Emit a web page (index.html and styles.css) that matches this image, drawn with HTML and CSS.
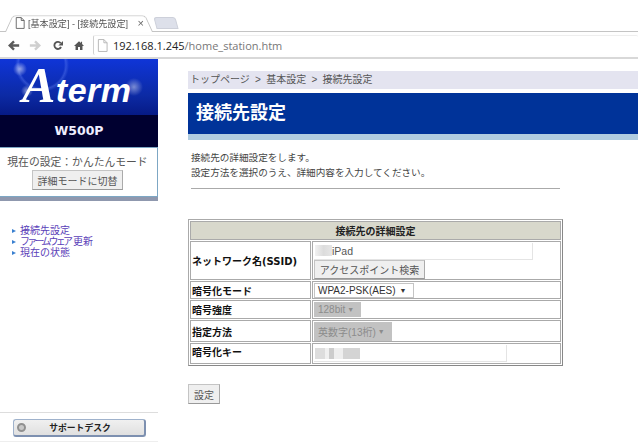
FILE: index.html
```html
<!DOCTYPE html>
<html lang="ja">
<head>
  <meta charset="UTF-8" />
  <title>[基本設定] - [接続先設定]</title>
  <link rel="stylesheet" href="styles.css">
</head>
<body>
  <div class="chrome">
    <div class="tabstrip">
      <div class="tab">
        <svg width="10" height="12" viewBox="0 0 12 14"><path d="M1.500 .5h6l3.500 3.500v9.500h-9.500z M7.500 .5v3.500h3.500" fill="#fff" stroke="#555"/></svg>
        <span class="tab-title">[基本設定] - [接続先設定]</span>
        <span class="tab-close">×</span>
      </div>
      <div class="newtab"></div>
    </div>
    <div class="toolbar">
      <svg width="12" height="11" viewBox="0 0 14 12"><path d="M13 6H3M7 1.200 2 6l5 4.800" fill="none" stroke="#5a5a5a" stroke-width="2.800"/></svg>
      <svg width="12" height="11" viewBox="0 0 14 12"><path d="M1 6h10M7 1.200 12 6l-5 4.800" fill="none" stroke="#cfcfcf" stroke-width="2.800"/></svg>
      <svg class="reload" width="10" height="11" viewBox="0 0 13 13"><path d="M10.500 8.500A4.600 4.600 0 1 1 10 3.500" fill="none" stroke="#555" stroke-width="2.400"/><path d="M13 .5v6H7z" fill="#555"/></svg>
      <svg class="home" width="10" height="11" viewBox="0 0 13 12"><path d="M6.500 .5 0 6.500h2V12h3.200V8h2.600v4H11V6.500h2L10.500 4V1H9v1.600z" fill="#555"/></svg>
      <div class="omnibox">
        <svg width="11" height="13" viewBox="0 0 12 14"><path d="M1.500 .5h6l3.500 3.500v9.500h-9.500z M7.500 .5v3.500h3.500" fill="#fff" stroke="#b4b4b4"/></svg>
        <span class="url"><b>192.168.1.245</b>/home_station.htm</span>
      </div>
    </div>
  </div>

  <div class="page">
    <aside class="side">
      <div class="logo"><span class="logo-text"><span class="logo-a">A</span>term</span></div>
      <div class="model">W500P</div>
      <div class="mode-box">
        <div>現在の設定：かんたんモード</div>
        <button class="btn mode-btn">詳細モードに切替</button>
      </div>
      <div class="mode-shadow"></div>
      <ul class="menu">
        <li><a>接続先設定</a></li>
        <li><a><span class="narrow">ファームウェア</span>更新</a></li>
        <li><a>現在の状態</a></li>
      </ul>
      <div class="support">
        <div class="support-btn"><span class="support-dot"></span><span class="support-label">サポートデスク</span></div>
      </div>
    </aside>

    <main class="main">
      <div class="crumb">トップページ &gt; 基本設定 &gt; 接続先設定</div>
      <h1 class="heading">接続先設定</h1>
      <div class="intro">
        <p>接続先の詳細設定をします。</p>
        <p>設定方法を選択のうえ、詳細内容を入力してください。</p>
      </div>
      <hr class="rule">
      <table class="form">
        <tr class="row-title"><th colspan="2" class="form-title">接続先の詳細設定</th></tr>
        <tr class="row-ssid">
          <th>ネットワーク名(SSID)</th>
          <td>
            <div class="field ssid"><span class="blur blur-short"></span>iPad</div>
            <button class="btn search-btn">アクセスポイント検索</button>
          </td>
        </tr>
        <tr class="row-mode">
          <th>暗号化モード</th>
          <td><span class="select">WPA2-PSK(AES)<i>▼</i></span></td>
        </tr>
        <tr class="row-strength">
          <th>暗号強度</th>
          <td><span class="select off">128bit<i>▼</i></span></td>
        </tr>
        <tr class="row-method">
          <th>指定方法</th>
          <td><span class="select off tall">英数字(13桁)<i>▼</i></span></td>
        </tr>
        <tr class="row-key">
          <th>暗号化キー</th>
          <td><div class="field key"><span class="blur blur-long"></span></div></td>
        </tr>
      </table>
      <button class="btn submit">設定</button>
    </main>
  </div>
</body>
</html>
```

FILE: styles.css
```css
* {
  box-sizing: border-box;
}

html, body {
  margin: 0;
  height: 100%;
}

body {
  width: 638px;
  height: 442px;
  overflow: hidden;
  background: #fff;
  color: #444;
  font-family: "Liberation Sans", "Noto Sans CJK JP", sans-serif;
  font-size: 10px;
  display: flex;
  flex-direction: column;
}

/* browser */
.chrome {
  height: 59px;
  flex: none;
}

.tabstrip {
  height: 32px;
  padding: 13px 0 0 5px;
  display: flex;
  align-items: flex-end;
  background: #fff;
  border-bottom: 1px solid #c4c4c4;
}

.tab {
  position: relative;
  z-index: 0;
  width: 148px;
  height: 19px;
  margin-bottom: -1px;
  padding: 0 9px 0 10px;
  display: flex;
  align-items: center;
  gap: 3px;
}

.tab::before {
  content: "";
  position: absolute;
  inset: 0;
  z-index: -1;
  background: #fff;
  border: 1px solid #c4c4c4;
  border-bottom: none;
  border-radius: 4px 4px 0 0;
  transform: perspective(40px) rotateX(14deg);
  transform-origin: bottom;
}

.tab-title {
  color: #555;
  font-size: 9.100px;
  white-space: nowrap;
}

.tab-close {
  margin-left: auto;
  color: #666;
  font-size: 11px;
}

.newtab {
  width: 22px;
  height: 12px;
  margin: 0 0 2px 2px;
  background: #dde0ea;
  border: 1px solid #cdd0da;
  border-radius: 3px 3px 0 0;
  transform: skewX(15deg);
}

.toolbar {
  height: 27px;
  padding: 3px 0 2px 8px;
  display: flex;
  align-items: center;
  gap: 9px;
  background: #fefefe;
  border-bottom: 2px solid #d8d8d8;
}

.reload {
  margin-left: 3px;
}

.home {
  margin-left: 2px;
}

.omnibox {
  flex: 1;
  height: 20px;
  padding-left: 3px;
  display: flex;
  align-items: center;
  gap: 5px;
  background: #fff;
  border-left: 1px solid #d0d0d0;
  border-top: 1px solid #eee;
  border-radius: 2px;
}

.url {
  color: #777;
  font-family: "Open Sans", "Liberation Sans", sans-serif;
  font-size: 11px;
}

.url b {
  color: #222;
  font-weight: 400;
}

/* layout */
.page {
  flex: 1;
  display: flex;
  min-height: 0;
}

.side {
  width: 158px;
  flex: none;
  display: flex;
  flex-direction: column;
}

.main {
  flex: 1;
  padding: 12px 0 0 30px;
}

/* sidebar */
.logo {
  height: 56px;
  padding: 0 0 5px 22px;
  display: flex;
  align-items: center;
  background:
    radial-gradient(circle at 20px 10px, rgba(255,255,255,.55), transparent 7px),
    radial-gradient(circle at 134px 28px, rgba(255,255,255,.45), transparent 9px),
    radial-gradient(circle at 27px 32px, rgba(255,255,255,.5), transparent 6px),
    radial-gradient(circle at 42px 6px, transparent 22px, rgba(120,150,255,.3) 24px, transparent 27px),
    linear-gradient(#0f35d8, #0c2aa4 65%, #061a86);
}

.logo-text {
  color: #fff;
  font-family: "Liberation Sans", sans-serif;
  font-size: 34px;
  font-weight: 700;
  font-style: italic;
  line-height: 1;
  letter-spacing: .5px;
}

.logo-a {
  font-family: "Liberation Serif", serif;
  font-size: 50px;
  font-weight: 700;
}

.model {
  height: 32px;
  line-height: 32px;
  background: #000030;
  color: #eef;
  font-family: "DejaVu Sans", sans-serif;
  font-size: 12.500px;
  font-weight: 700;
  text-align: center;
}

.mode-box {
  height: 50px;
  padding: 7px 2px 0 0;
  display: flex;
  flex-direction: column;
  align-items: center;
  gap: 1px;
  background: #fff;
  border: 1px solid #7da7c4;
  border-left: none;
  color: #555;
  font-size: 10.800px;
  line-height: 14px;
}

.mode-shadow {
  height: 4px;
  background: #8f98ae;
}

.btn {
  padding: 0;
  background: #efefef;
  border: 1px solid #c4c4c4;
  border-bottom-color: #999;
  border-right-color: #aaa;
  color: #555;
  font-family: inherit;
  font-size: 10px;
}

.mode-btn {
  width: 91px;
  height: 20px;
}

.menu {
  margin: 24px 0 0;
  padding: 0 0 0 12px;
  list-style: none;
  color: #5a40b8;
  font-size: 10px;
  line-height: 11px;
}

.menu li {
  display: flex;
  align-items: center;
  gap: 4px;
}

.menu li::before {
  content: "";
  border-left: 4px solid #3a80d0;
  border-top: 2.500px solid transparent;
  border-bottom: 2.500px solid transparent;
}

.narrow {
  letter-spacing: -2.800px;
  margin-right: 2.800px;
}

.support {
  margin-top: auto;
  height: 30px;
  padding: 6px 12px 0 13px;
  border-top: 1px solid #ddd;
  border-bottom: 1px solid #eee;
}

.support-btn {
  height: 18px;
  display: flex;
  align-items: center;
  padding-left: 3px;
  background: linear-gradient(#f0f0f0, #e0e0e0);
  border: 1px solid #9fb2cc;
  border-bottom: 2px solid #7d90b0;
  border-right: 2px solid #7d90b0;
  border-radius: 3px;
}

.support-dot {
  width: 9px;
  height: 9px;
  border-radius: 50%;
  background: #c8c8c8;
  border: 2px solid #909090;
}

.support-label {
  flex: 1;
  padding-right: 10px;
  color: #222;
  font-size: 8.800px;
  font-weight: 700;
  text-align: center;
}

/* main */
.crumb {
  height: 18px;
  line-height: 18px;
  padding-left: 2px;
  background: #e4e4f0;
  color: #555;
  font-size: 10px;
  word-spacing: 2.500px;
}

.heading {
  height: 47px;
  margin: 4px 0 0;
  padding: 0 0 5px 8px;
  display: flex;
  align-items: center;
  background: #003399;
  border-bottom: 6px solid #b0cce0;
  color: #fff;
  font-size: 18px;
  font-weight: 700;
}

.intro {
  margin: 10px 0 0 3px;
  color: #444;
  font-size: 9.600px;
  line-height: 15px;
}

.intro p {
  margin: 0;
}

.rule {
  width: 369px;
  height: 1px;
  margin: 8px 0 0 3px;
  border: 0;
  background: #aaa;
}

.form {
  width: 375px;
  margin-top: 30px;
  border: 1px solid #aaa;
  border-right-color: #888;
  border-bottom-color: #888;
  border-spacing: 1px;
  border-collapse: separate;
  font-size: 10px;
}

.form th, .form td {
  padding: 0 1px;
  border: 1px solid #aaa;
}

.form th {
  width: 121px;
  color: #111;
  font-family: "DejaVu Sans", "Noto Sans CJK JP", sans-serif;
  font-weight: 700;
  text-align: left;
}

.row-title > * { height: 19px; }
.row-ssid > * { height: 39px; }
.row-mode > * { height: 18px; }
.row-strength > * { height: 19px; }
.row-method > * { height: 22px; }
.row-key > * { height: 20px; }

.form .row-key th {
  padding-bottom: 4px;
}

.form .form-title {
  width: auto;
  background: #d8d8cc;
  color: #222;
  font-family: "Liberation Sans", "Noto Sans CJK JP", sans-serif;
  text-align: center;
}

.field {
  display: flex;
  align-items: center;
  height: 17px;
  padding-left: 1px;
  background: #fff;
  border-right: 1px solid #e4e4e4;
  border-bottom: 1px solid #e4e4e4;
  color: #555;
  font-size: 10.500px;
}

.ssid {
  width: 219px;
}

.key {
  width: 193px;
}

.blur {
  height: 11px;
}

.blur-short {
  width: 17px;
  background: linear-gradient(90deg, #f2f2f2, #dcdcdc 50%, #e6e6e6);
}

.blur-long {
  width: 45px;
  background: linear-gradient(90deg, #ddd 0 22%, #f0f0f0 22% 32%, #ccc 32% 42%, #eee 42% 62%, #d4d4d4 62% 100%);
}

.search-btn {
  display: block;
  width: 111px;
  height: 19px;
}

.select {
  display: inline-flex;
  align-items: center;
  height: 15px;
  padding: 0 3px;
  background: #fff;
  border: 1px solid #c4c4c4;
  color: #333;
  font-size: 10px;
  vertical-align: middle;
}

.select i {
  margin: 0 3px 0 4px;
  font-size: 7px;
  font-style: normal;
}

.select.off {
  background: #c2c2c2;
  border-color: #c2c2c2;
  color: #8c8c8c;
}

.select.off i {
  margin-left: 2px;
}

.select.tall {
  height: 19px;
}

.submit {
  display: block;
  width: 32px;
  height: 20px;
  margin-top: 18px;
}
```
